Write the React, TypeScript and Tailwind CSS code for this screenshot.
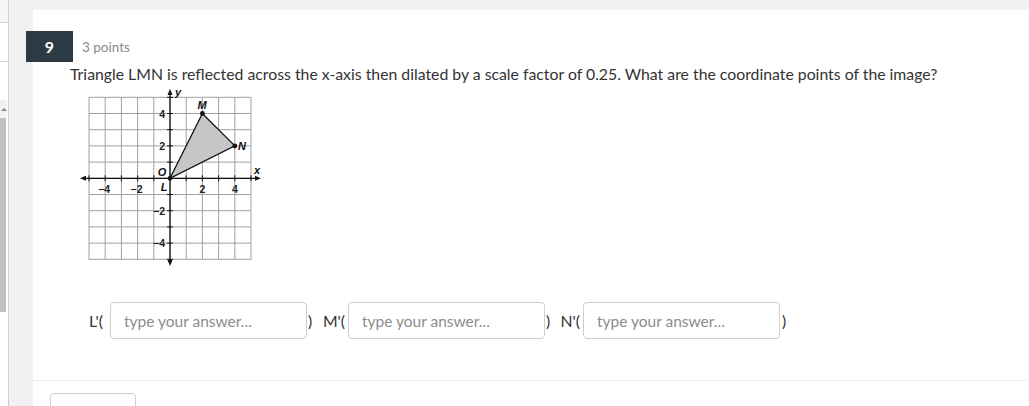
import React from 'react';

const ox = 170;
const oy = 178.3;
const u = 16.2;

function Graph() {
  const ticks = [-5, -4, -3, -2, -1, 0, 1, 2, 3, 4, 5];
  const px = (v: number) => ox + v * u;
  const py = (v: number) => oy - v * u;
  const label = 'font-["Liberation_Sans",Arial,sans-serif] font-bold';

  return (
    <svg width={190} height={185} viewBox="76 86 190 185" className="block">
      {ticks.map((t) => (
        <line key={'v' + t} x1={px(t)} y1={py(5)} x2={px(t)} y2={py(-5)} stroke="#a0a0a0" strokeWidth={1} />
      ))}
      {ticks.map((t) => (
        <line key={'h' + t} x1={px(-5)} y1={py(t)} x2={px(5)} y2={py(t)} stroke="#a0a0a0" strokeWidth={1} />
      ))}

      <polygon
        points={`${px(0)},${py(0)} ${px(2)},${py(4)} ${px(4)},${py(2)}`}
        fill="#c6c6c6"
        stroke="#111"
        strokeWidth={1.3}
      />

      {/* axes */}
      <line x1={83} y1={oy} x2={258} y2={oy} stroke="#111" strokeWidth={1.3} />
      <line x1={ox} y1={92} x2={ox} y2={263} stroke="#111" strokeWidth={1.3} />
      <polygon points={`80,${oy} 86,${oy - 2.5} 86,${oy + 2.5}`} fill="#111" />
      <polygon points={`261,${oy} 255,${oy - 2.5} 255,${oy + 2.5}`} fill="#111" />
      <polygon points={`${ox},89 ${ox - 2.5},95 ${ox + 2.5},95`} fill="#111" />
      <polygon points={`${ox},266 ${ox - 2.5},260 ${ox + 2.5},260`} fill="#111" />
      {ticks
        .filter((t) => t !== 0)
        .map((t) => (
          <g key={'t' + t}>
            <line x1={px(t)} y1={oy - 3} x2={px(t)} y2={oy + 3} stroke="#111" strokeWidth={1} />
            <line x1={ox - 3} y1={py(t)} x2={ox + 3} y2={py(t)} stroke="#111" strokeWidth={1} />
          </g>
        ))}

      <circle cx={px(0)} cy={py(0)} r={2.4} fill="#111" />
      <circle cx={px(2)} cy={py(4)} r={2.4} fill="#111" />
      <circle cx={px(4)} cy={py(2)} r={2.4} fill="#111" />

      {/* x tick labels */}
      <g className={label} fontSize={10.5} fill="#222" textAnchor="middle">
        <text x={px(-4) - 1} y={oy + 15}>−4</text>
        <text x={px(-2) - 1} y={oy + 15}>−2</text>
        <text x={px(2)} y={oy + 15}>2</text>
        <text x={px(4)} y={oy + 15}>4</text>
      </g>
      {/* y tick labels */}
      <g className={label} fontSize={10.5} fill="#222" textAnchor="end">
        <text x={ox - 5} y={py(4) + 4}>4</text>
        <text x={ox - 5} y={py(2) + 4}>2</text>
        <text x={ox - 5} y={py(-2) + 4}>−2</text>
        <text x={ox - 5} y={py(-4) + 4}>−4</text>
      </g>

      <g className={label} fontSize={11} fill="#111" fontStyle="italic" textAnchor="middle">
        <text x={178} y={96}>y</text>
        <text x={257} y={174}>x</text>
        <text x={202} y={109}>M</text>
        <text x={242} y={150}>N</text>
        <text x={162} y={176}>O</text>
        <text x={164} y={191}>L</text>
      </g>
    </svg>
  );
}

function AnswerInput() {
  return (
    <input
      type="text"
      placeholder="type your answer..."
      className="h-[37px] w-[197px] shrink-0 rounded-[4px] border border-[#cfcfcf] bg-white px-[13px] text-[15.5px] text-[#333] outline-none placeholder:text-[#8c8c8c]"
    />
  );
}

function Between({ text, width }: { text: string; width: string }) {
  return (
    <span className={`flex shrink-0 justify-between pl-[1px] pr-[3px] ${width}`}>
      <span>)</span>
      <span>{text}</span>
    </span>
  );
}

export default function App() {
  return (
    <div className="flex h-[406px] w-[1029px] overflow-hidden bg-[#f1f1f1] font-['Lato','Noto_Sans',sans-serif]">
      {/* left strip with scrollbar */}
      <div className="flex w-[9px] shrink-0 flex-col border-r border-[#cfcfcf] bg-white">
        <div className="h-[23px] border-b border-[#d4d4d4] bg-[#f6f6f6]" />
        <div className="h-[39px] border-b border-[#d4d4d4]" />
        <div className="h-[38px]" />
        <div className="flex h-[18px] w-[7px] items-center justify-center bg-[#f1f1f1]">
          <div className="h-0 w-0 border-x-[3px] border-b-[3px] border-x-transparent border-b-[#8a8a8a]" />
        </div>
        <div className="h-[194px] w-[6px] bg-[#c1c1c1]" />
      </div>

      {/* main area */}
      <div className="flex flex-1 flex-col pl-[24px] pt-[10px]">
        <div className="flex flex-1 flex-col bg-white">
          <div className="mt-[21px] flex items-center">
            <div className="-ml-[7px] flex h-[31px] w-[47px] items-center justify-center bg-[#2b3a44] text-[16px] font-bold text-white">
              9
            </div>
            <span className="ml-[9px] mt-[2px] text-[13.5px] text-[#8a8a8a]">3 points</span>
          </div>

          <p className="ml-[37px] mt-[2px] whitespace-nowrap text-[15.8px] leading-[20px] text-[#333]">
            Triangle LMN is reflected across the x-axis then dilated by a scale factor of 0.25. What are the coordinate points of the image?
          </p>

          <div className="ml-[43px] mt-[2px]">
            <Graph />
          </div>

          <div className="ml-[56px] mt-[31px] flex items-center text-[15.8px] text-[#333]">
            <span className="w-[21px] shrink-0">L'(</span>
            <AnswerInput />
            <Between text="M'(" width="w-[41px]" />
            <AnswerInput />
            <Between text="N'(" width="w-[38px]" />
            <AnswerInput />
            <span className="ml-[2px]">)</span>
          </div>

          <div className="mt-[41px] border-t border-[#eeeeee]" />
          <div className="ml-[17px] mt-[12px] h-[30px] w-[86px] rounded-[4px] border border-[#d0d0d0]" />
        </div>
      </div>
    </div>
  );
}
